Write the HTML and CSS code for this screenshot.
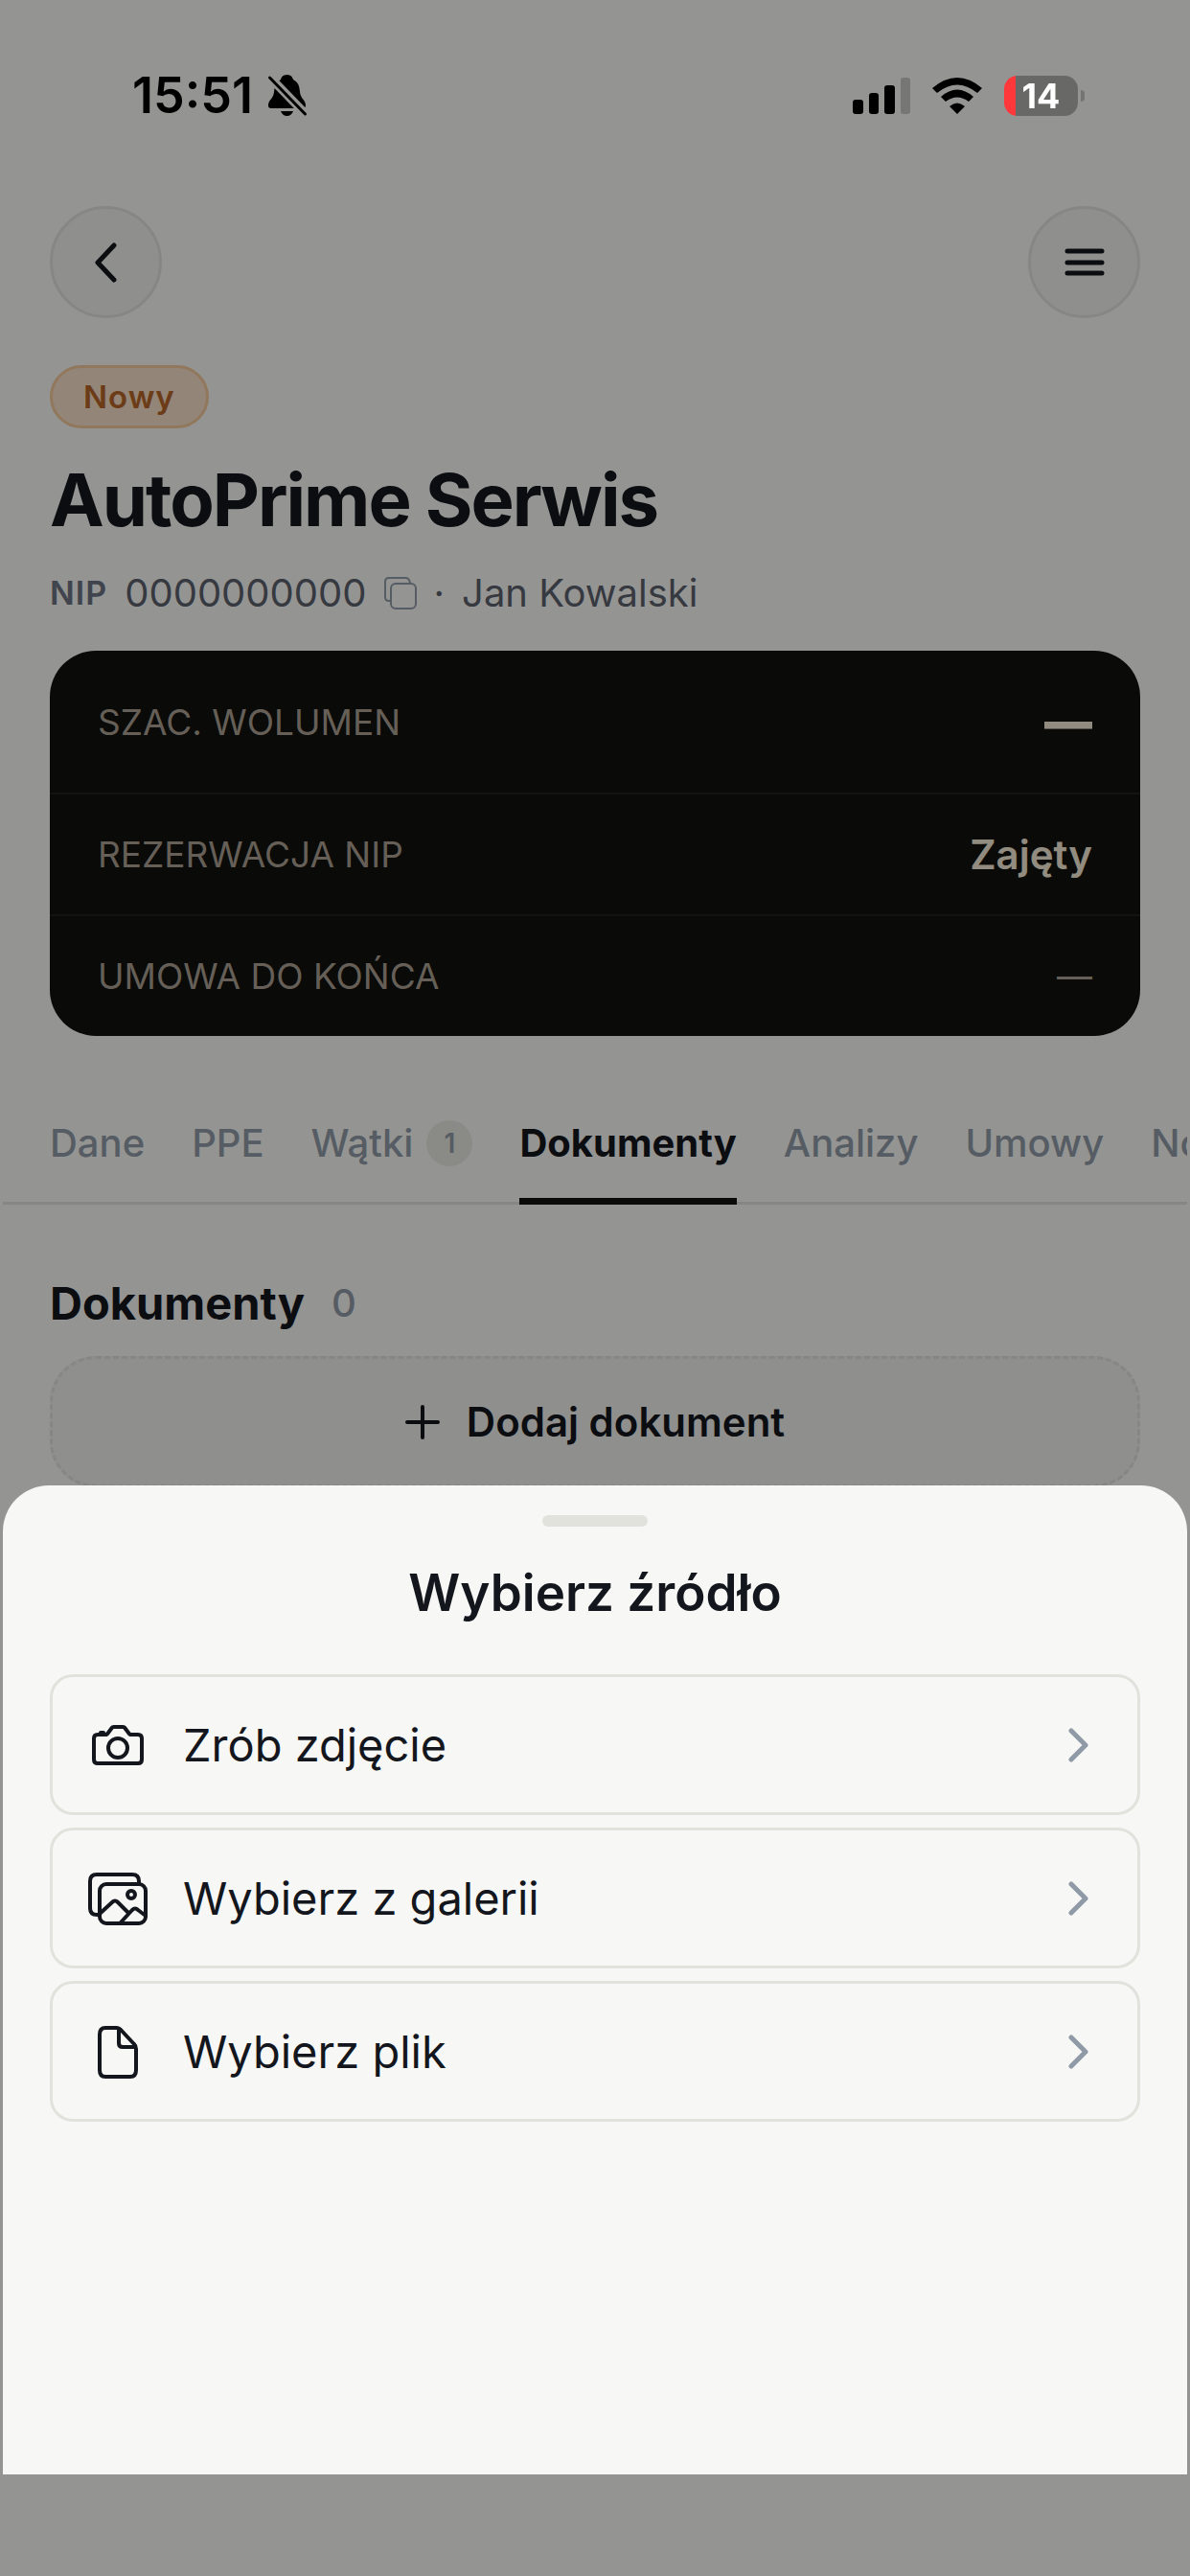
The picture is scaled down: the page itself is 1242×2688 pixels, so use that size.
FILE: index.html
```html
<!DOCTYPE html>
<html lang="pl">
<head>
  <meta charset="UTF-8">
  <meta name="viewport" content="width=device-width, initial-scale=1">
  <title>AutoPrime Serwis</title>
  <link rel="stylesheet" href="styles.css">
</head>
<body>

<!-- Status bar -->
<div class="status-bar">
  <span class="clock">15:51</span>
  <svg class="bell" width="44" height="48" viewBox="0 0 44 48">
    <path d="M21.500 2C17 2 15.500 5 15 7C10 10 8.500 15 8 20C7.500 27 2 28 2 34Q2 37 5 37H38Q41 37 41 34C41 28 35.500 27 35 20C34.500 13 33 10 28 7C27.500 5 26 2 21.500 2Z"/>
    <path d="M15 40H28Q26 45 21.500 45Q17 45 15 40Z"/>
    <path class="bell-gap" d="M3 4L41 43"/>
    <path class="bell-slash" d="M3.500 5L40.500 43"/>
  </svg>
  <div class="status-icons">
    <svg width="60" height="38" viewBox="0 0 60 38">
      <rect x="0" y="23" width="11" height="15" rx="3"/>
      <rect x="17" y="16" width="10" height="22" rx="3"/>
      <rect x="33" y="8" width="11" height="30" rx="3"/>
      <rect x="50" y="0" width="10" height="38" rx="3" opacity=".2"/>
    </svg>
    <svg width="52" height="38" viewBox="0 0 52 38">
      <path d="M0 11Q26 -11 52 11L47 16Q26 -1 5 16Z"/>
      <path d="M9 20Q26 5 43 20L38 25Q26 16 14 25Z"/>
      <path d="M18 30Q26 23 34 30L26 38Z"/>
    </svg>
    <div class="battery"><span>14</span></div>
  </div>
</div>

<header class="top-bar">
  <button class="round-btn" aria-label="Wstecz">
    <svg width="48" height="48" viewBox="0 0 48 48"><path d="M32 6L15 24L32 42"/></svg>
  </button>
  <button class="round-btn" aria-label="Menu">
    <svg width="48" height="48" viewBox="0 0 48 48"><path d="M6 12H42M6 24H42M6 35H42"/></svg>
  </button>
</header>

<main>
  <section class="client">
    <span class="badge">Nowy</span>
    <h1>AutoPrime Serwis</h1>
    <div class="meta">
      <span class="meta-label">NIP</span>
      <span>0000000000</span>
      <button class="copy-btn" aria-label="Kopiuj NIP">
        <svg width="34" height="34" viewBox="0 0 34 34">
          <path d="M7 25H5Q1 25 1 21V5Q1 1 5 1H22Q26 1 27 6"/>
          <rect x="7" y="7" width="26" height="26" rx="5"/>
        </svg>
      </button>
      <span class="dot">·</span>
      <span>Jan Kowalski</span>
    </div>

    <dl class="summary">
      <div class="summary-row first">
        <dt>SZAC. WOLUMEN</dt>
        <dd class="volume">—</dd>
      </div>
      <div class="summary-row">
        <dt>REZERWACJA NIP</dt>
        <dd class="taken">Zajęty</dd>
      </div>
      <div class="summary-row">
        <dt>UMOWA DO KOŃCA</dt>
        <dd>—</dd>
      </div>
    </dl>
  </section>

  <nav class="tabs">
    <a href="#dane">Dane</a>
    <a href="#ppe">PPE</a>
    <a href="#watki">Wątki <span class="count">1</span></a>
    <a href="#dokumenty" class="active">Dokumenty</a>
    <a href="#analizy">Analizy</a>
    <a href="#umowy">Umowy</a>
    <a href="#notatki">Notatki</a>
  </nav>

  <section class="documents">
    <div class="section-head">
      <h2>Dokumenty</h2>
      <span>0</span>
    </div>
    <button class="add-btn">
      <svg width="36" height="36" viewBox="0 0 36 36"><path d="M18 2V34M2 18H34"/></svg>
      Dodaj dokument
    </button>
  </section>
</main>

<!-- Bottom sheet -->
<div class="backdrop">
  <div class="sheet" role="dialog" aria-labelledby="sheet-title">
    <div class="handle"></div>
    <h2 id="sheet-title">Wybierz źródło</h2>
    <div class="options">
      <button class="option">
        <svg class="option-icon" viewBox="0 0 66 66">
          <path d="M12 22H20Q22 22 23 20L26 16Q27 14 29 14H38Q40 14 41 16L44 20Q45 22 47 22H54Q58 22 58 26V48Q58 52 54 52H12Q8 52 8 48V26Q8 22 12 22Z"/>
          <path d="M15 20H18"/>
          <circle cx="33" cy="36" r="10"/>
        </svg>
        <span>Zrób zdjęcie</span>
        <svg class="chevron" viewBox="0 0 36 36"><path d="M10 3L25 18L10 33"/></svg>
      </button>
      <button class="option">
        <svg class="option-icon" viewBox="0 0 66 66">
          <path d="M14 50H11Q4 50 4 43V15Q4 8 11 8H48Q55 8 55 15V18"/>
          <rect x="14" y="18" width="48" height="41" rx="7"/>
          <circle cx="47" cy="29" r="4"/>
          <path d="M14 49L27 37Q30 34 33 37L44 48M36 58L48 45Q51 42 54 45L62 51"/>
        </svg>
        <span>Wybierz z galerii</span>
        <svg class="chevron" viewBox="0 0 36 36"><path d="M10 3L25 18L10 33"/></svg>
      </button>
      <button class="option">
        <svg class="option-icon" viewBox="0 0 66 66">
          <path d="M20 8H32Q34 8 36 10L50 25Q52 27 52 30V52Q52 59 46 59H20Q14 59 14 52V15Q14 8 20 8Z"/>
          <path d="M34 9V24Q34 28 38 28H51"/>
        </svg>
        <span>Wybierz plik</span>
        <svg class="chevron" viewBox="0 0 36 36"><path d="M10 3L25 18L10 33"/></svg>
      </button>
    </div>
  </div>
</div>

</body>
</html>
```

FILE: styles.css
```css
* {
  box-sizing: border-box;
}

body {
  margin: 0;
  min-height: 100vh;
  font-family: Inter, "Liberation Sans", sans-serif;
  background: #f7f7f4;
  color: #13161c;
  overflow: hidden;
}

h1, h2, dl, dd {
  margin: 0;
}

button {
  font-family: inherit;
  color: inherit;
  cursor: pointer;
}

svg {
  display: block;
  flex-shrink: 0;
}

/* Status bar stays above the backdrop */
.status-bar {
  position: relative;
  z-index: 20;
  display: flex;
  align-items: center;
  height: 128px;
  padding: 72px 110px 0 138px;
  color: #000;
}

.clock {
  font-size: 52px;
  font-weight: 600;
  line-height: 56px;
}

.bell {
  margin-left: 14px;
}

.bell-gap {
  stroke: #949492;
  stroke-width: 9;
}

.bell-slash {
  stroke: #000;
  stroke-width: 3;
  stroke-linecap: round;
}

.status-icons {
  display: flex;
  align-items: center;
  gap: 23px;
  margin-left: auto;
}

.battery {
  position: relative;
  width: 84px;
  padding-right: 7px;
}

.battery span {
  display: block;
  border-radius: 14px;
  background: linear-gradient(to right, #ff383c 12px, #686866 12px);
  color: #fff;
  font-size: 36px;
  font-weight: 700;
  line-height: 42px;
  text-align: center;
}

.battery::after {
  content: "";
  position: absolute;
  right: 0;
  top: 15px;
  width: 4px;
  height: 12px;
  border-radius: 0 6px 6px 0;
  background: #747472;
}

/* Header */
.top-bar {
  display: flex;
  justify-content: space-between;
  padding: 87px 52px 0;
}

.round-btn {
  display: flex;
  align-items: center;
  justify-content: center;
  width: 117px;
  height: 117px;
  padding: 0;
  border: 3px solid #e0e0de;
  border-radius: 50%;
  background: #eeeeec;
}

.round-btn svg,
.add-btn svg {
  fill: none;
  stroke: currentColor;
  stroke-width: 5;
  stroke-linecap: round;
  stroke-linejoin: round;
}

/* Client */
.client {
  padding: 49px 52px 0;
}

.badge {
  display: block;
  width: fit-content;
  padding: 0 32px;
  border: 3px solid #f2c79a;
  border-radius: 33px;
  background: #f5dec6;
  color: #b46428;
  font-size: 33px;
  font-weight: 600;
  line-height: 60px;
  letter-spacing: 1px;
}

h1 {
  margin-top: 28px;
  font-size: 76px;
  font-weight: 700;
  line-height: 92px;
  letter-spacing: -2px;
}

.meta {
  display: flex;
  align-items: center;
  margin-top: 28px;
  color: #5a606c;
  font-size: 40px;
  line-height: 48px;
}

.meta-label {
  margin-right: 18px;
  color: #6b7280;
  font-size: 34px;
  font-weight: 600;
  letter-spacing: 1px;
}

.copy-btn {
  margin-left: 18px;
  padding: 0;
  border: 0;
  background: none;
}

.copy-btn svg {
  fill: none;
  stroke: #8f9aa6;
  stroke-width: 2;
}

.dot {
  margin: 0 18px;
}

.summary {
  margin-top: 36px;
  border-radius: 48px;
  background: #11110e;
  color: #a89f91;
  font-size: 37px;
}

.summary-row {
  display: flex;
  align-items: center;
  justify-content: space-between;
  height: 127px;
  padding: 0 50px;
  border-top: 2px solid #21211f;
}

.summary-row.first {
  height: 148px;
  border-top: 0;
}

.summary .volume {
  color: #f2e8d5;
  font-size: 50px;
  font-weight: 900;
}

.summary .taken {
  color: #f2e8d5;
  font-size: 42px;
  font-weight: 600;
}

/* Tabs */
.tabs {
  display: flex;
  gap: 49px;
  margin: 88px 3px 0;
  padding-left: 49px;
  overflow: hidden;
  box-shadow: inset 0 -3px #dfdfdb;
}

.tabs a {
  display: flex;
  align-items: center;
  gap: 14px;
  padding-bottom: 33px;
  border-bottom: 7px solid transparent;
  color: #8f9aa6;
  font-size: 40px;
  font-weight: 500;
  line-height: 48px;
  text-decoration: none;
}

.tabs .active {
  border-color: #11110e;
  color: #13161c;
  font-weight: 700;
}

.count {
  width: 48px;
  border-radius: 24px;
  background: #e7e7e0;
  font-size: 28px;
  font-weight: 600;
  text-align: center;
}

/* Documents */
.documents {
  padding: 73px 52px 0;
}

.section-head {
  display: flex;
  align-items: center;
  gap: 28px;
  line-height: 60px;
}

.section-head h2 {
  font-size: 47px;
  font-weight: 700;
}

.section-head span {
  color: #8f9aa6;
  font-size: 40px;
  font-weight: 500;
}

.add-btn {
  display: flex;
  align-items: center;
  justify-content: center;
  gap: 28px;
  width: 100%;
  height: 137px;
  margin-top: 25px;
  border: 3px dashed #e0e0de;
  border-radius: 48px;
  background: #eeeeec;
  font-size: 42px;
  font-weight: 600;
}

.add-btn svg {
  stroke-width: 4;
}

/* Bottom sheet */
.backdrop {
  position: fixed;
  inset: 0;
  z-index: 10;
  display: flex;
  flex-direction: column;
  justify-content: flex-end;
  padding: 0 3px 106px;
  background: rgba(0, 0, 0, 0.4);
}

.sheet {
  padding: 31px 49px 368px;
  border-radius: 48px 48px 0 0;
  background: #f7f7f5;
}

.handle {
  width: 110px;
  height: 12px;
  margin: 0 auto;
  border-radius: 6px;
  background: #e2e2dd;
}

.sheet h2 {
  margin-top: 37px;
  font-size: 53px;
  font-weight: 600;
  line-height: 64px;
  text-align: center;
}

.options {
  display: flex;
  flex-direction: column;
  gap: 13px;
  margin-top: 53px;
}

.option {
  display: flex;
  align-items: center;
  width: 100%;
  height: 147px;
  padding: 0 43px 0 35px;
  border: 3px solid #e2e2dd;
  border-radius: 24px;
  background: none;
  font-size: 47px;
  text-align: left;
}

.option span {
  flex: 1;
  margin-left: 35px;
}

.option-icon {
  width: 66px;
  height: 66px;
  fill: none;
  stroke: #13161c;
  stroke-width: 4;
  stroke-linecap: round;
  stroke-linejoin: round;
}

.chevron {
  width: 36px;
  height: 36px;
  fill: none;
  stroke: #8f9aa6;
  stroke-width: 5;
  stroke-linecap: round;
  stroke-linejoin: round;
}
```
